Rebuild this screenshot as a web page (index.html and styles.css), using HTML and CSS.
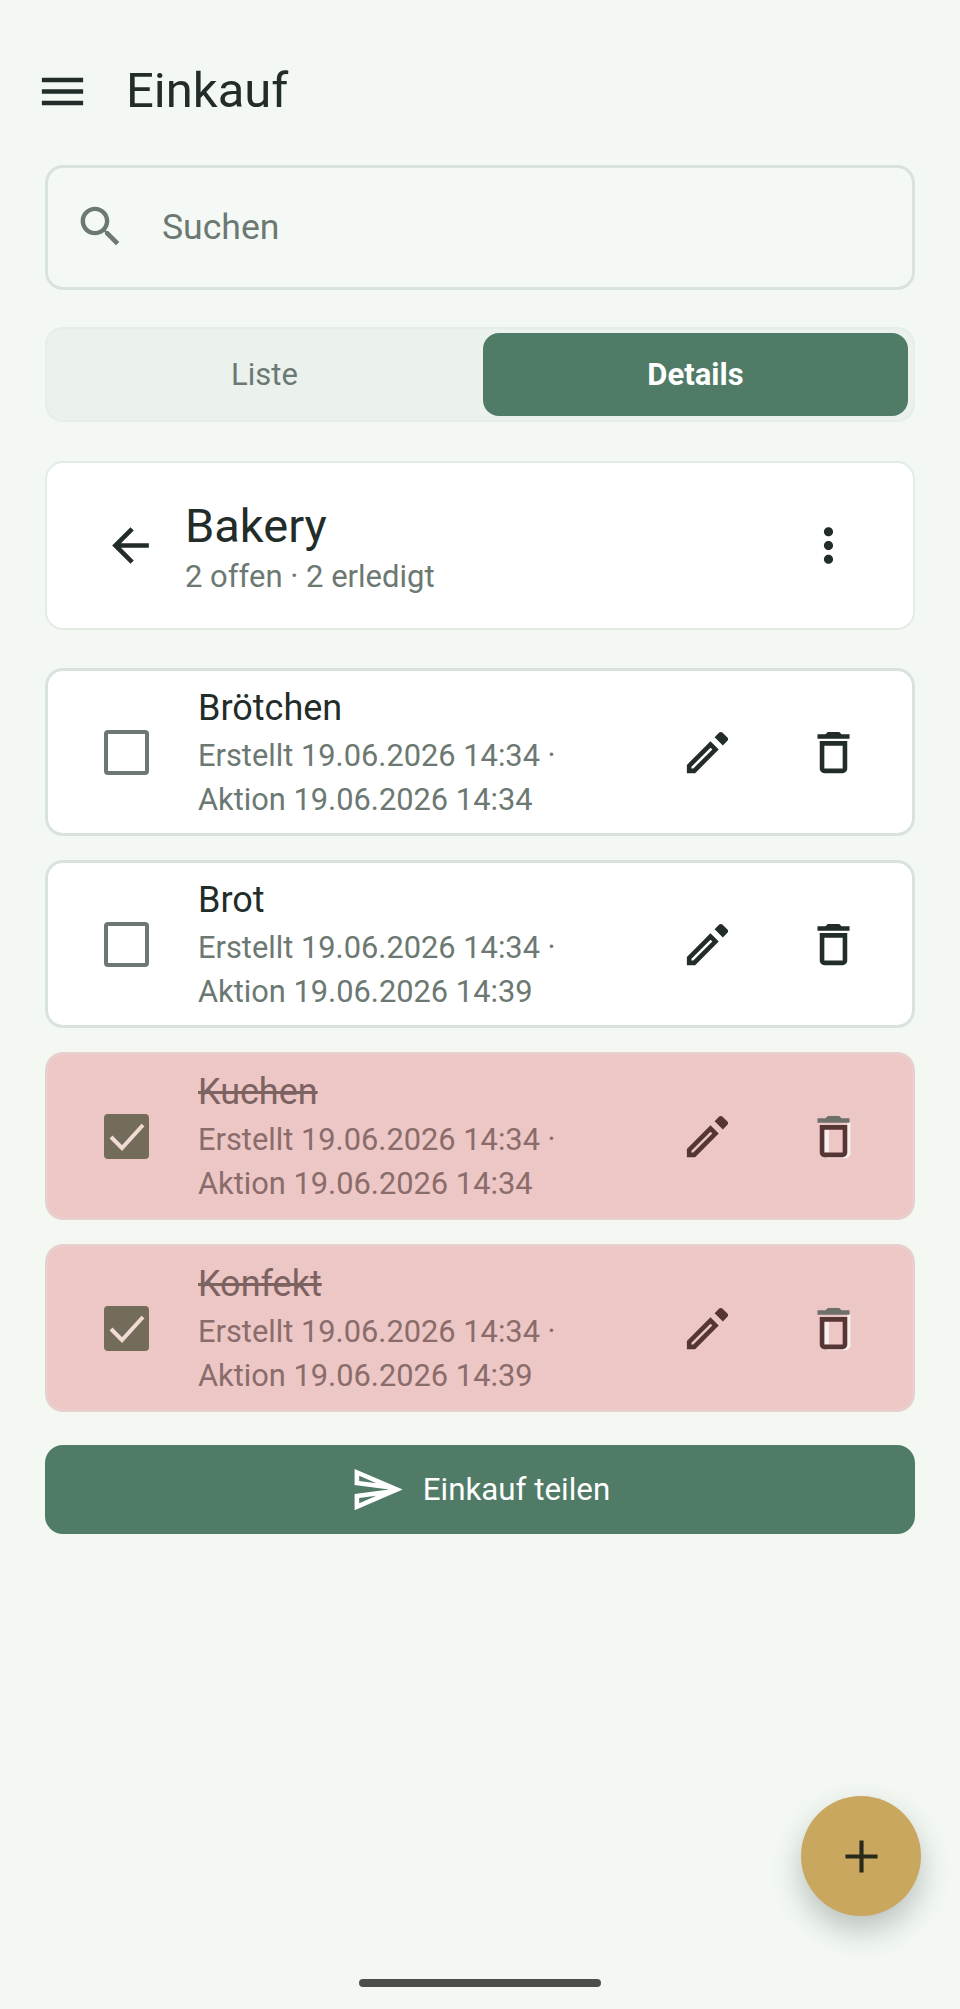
FILE: index.html
```html
<!doctype html>
<html lang="de">
<head>
  <meta charset="utf-8" />
  <meta name="viewport" content="width=device-width,initial-scale=1" />
  <title>Einkauf</title>
  <link rel="stylesheet" href="styles.css">
</head>
<body>
  <div class="screen">
    <header class="toolbar">
      <svg class="icon" viewBox="0 0 24 24"><path d="M3 18h18v-2H3v2zm0-5h18v-2H3v2zm0-7v2h18V6H3z"/></svg>
      <h1>Einkauf</h1>
    </header>

    <main class="content">
      <div class="search">
        <svg class="icon" viewBox="0 0 24 24"><path d="M15.5 14h-.79l-.28-.27C15.41 12.59 16 11.11 16 9.5 16 5.91 13.09 3 9.5 3S3 5.91 3 9.5 5.91 16 9.5 16c1.61 0 3.09-.59 4.23-1.57l.27.28v.79l5 4.99L20.49 19l-4.99-5zm-6 0C7.01 14 5 11.99 5 9.5S7.01 5 9.5 5 14 7.01 14 9.5 11.99 14 9.5 14z"/></svg>
        <span>Suchen</span>
      </div>

      <div class="tabs">
        <div class="tab">Liste</div>
        <div class="tab active">Details</div>
      </div>

      <section class="list-head">
        <svg class="icon" viewBox="0 0 24 24"><path d="M20 11H7.83l5.59-5.59L12 4l-8 8 8 8 1.41-1.41L7.83 13H20v-2z"/></svg>
        <div class="list-info">
          <h2>Bakery</h2>
          <div class="count">2 offen · 2 erledigt</div>
        </div>
        <svg class="icon" viewBox="0 0 24 24"><path d="M12 8c1.1 0 2-.9 2-2s-.9-2-2-2-2 .9-2 2 .9 2 2 2zm0 2c-1.1 0-2 .9-2 2s.9 2 2 2 2-.9 2-2-.9-2-2-2zm0 6c-1.1 0-2 .9-2 2s.9 2 2 2 2-.9 2-2-.9-2-2-2z"/></svg>
      </section>

      <div class="items">
        <article class="item">
          <div class="check"></div>
          <div class="item-text">
            <div class="name">Brötchen</div>
            <div class="meta">Erstellt 19.06.2026 14:34 · Aktion 19.06.2026 14:34</div>
          </div>
          <svg class="icon" viewBox="0 0 24 24"><path fill-rule="evenodd" d="M3 17.4V21h3.6L16.9 10.7l-3.6-3.6L3 17.4zM5 19v-.8l8.3-8.3.8.8L5.8 19H5z"/><path d="M20.7 6.9c.4-.4.4-1 0-1.4l-2.2-2.2c-.4-.4-1-.4-1.4 0l-2 2 3.6 3.6 2-2z"/></svg>
          <svg class="icon" viewBox="0 0 24 24"><path d="M6 19c0 1.1.9 2 2 2h8c1.1 0 2-.9 2-2V7H6v12zM8 9h8v10H8V9zm7.5-5l-1-1h-5l-1 1H5v2h14V4z"/></svg>
        </article>

        <article class="item">
          <div class="check"></div>
          <div class="item-text">
            <div class="name">Brot</div>
            <div class="meta">Erstellt 19.06.2026 14:34 · Aktion 19.06.2026 14:39</div>
          </div>
          <svg class="icon" viewBox="0 0 24 24"><path fill-rule="evenodd" d="M3 17.4V21h3.6L16.9 10.7l-3.6-3.6L3 17.4zM5 19v-.8l8.3-8.3.8.8L5.8 19H5z"/><path d="M20.7 6.9c.4-.4.4-1 0-1.4l-2.2-2.2c-.4-.4-1-.4-1.4 0l-2 2 3.6 3.6 2-2z"/></svg>
          <svg class="icon" viewBox="0 0 24 24"><path d="M6 19c0 1.1.9 2 2 2h8c1.1 0 2-.9 2-2V7H6v12zM8 9h8v10H8V9zm7.5-5l-1-1h-5l-1 1H5v2h14V4z"/></svg>
        </article>

        <article class="item done">
          <div class="check"><svg viewBox="0 0 45 45"><path d="M7 23l11 11L39 11" fill="none" stroke-width="4"/></svg></div>
          <div class="item-text">
            <div class="name">Kuchen</div>
            <div class="meta">Erstellt 19.06.2026 14:34 · Aktion 19.06.2026 14:34</div>
          </div>
          <svg class="icon" viewBox="0 0 24 24"><path fill-rule="evenodd" d="M3 17.4V21h3.6L16.9 10.7l-3.6-3.6L3 17.4zM5 19v-.8l8.3-8.3.8.8L5.8 19H5z"/><path d="M20.7 6.9c.4-.4.4-1 0-1.4l-2.2-2.2c-.4-.4-1-.4-1.4 0l-2 2 3.6 3.6 2-2z"/></svg>
          <svg class="icon trash" viewBox="0 0 24 24"><path class="ghost" d="M8 9h2v10H8zM18 5.5h1.4V20l-1.4 1.5h-9V21h7c1.1 0 2-.9 2-2V5.5z"/><path d="M6 19c0 1.1.9 2 2 2h8c1.1 0 2-.9 2-2V7H6v12zM8 9h8v10H8V9z"/><path class="lid" d="M15.5 4l-1-1h-5l-1 1H5v2h14V4z"/></svg>
        </article>

        <article class="item done">
          <div class="check"><svg viewBox="0 0 45 45"><path d="M7 23l11 11L39 11" fill="none" stroke-width="4"/></svg></div>
          <div class="item-text">
            <div class="name">Konfekt</div>
            <div class="meta">Erstellt 19.06.2026 14:34 · Aktion 19.06.2026 14:39</div>
          </div>
          <svg class="icon" viewBox="0 0 24 24"><path fill-rule="evenodd" d="M3 17.4V21h3.6L16.9 10.7l-3.6-3.6L3 17.4zM5 19v-.8l8.3-8.3.8.8L5.8 19H5z"/><path d="M20.7 6.9c.4-.4.4-1 0-1.4l-2.2-2.2c-.4-.4-1-.4-1.4 0l-2 2 3.6 3.6 2-2z"/></svg>
          <svg class="icon trash" viewBox="0 0 24 24"><path class="ghost" d="M8 9h2v10H8zM18 5.5h1.4V20l-1.4 1.5h-9V21h7c1.1 0 2-.9 2-2V5.5z"/><path d="M6 19c0 1.1.9 2 2 2h8c1.1 0 2-.9 2-2V7H6v12zM8 9h8v10H8V9z"/><path class="lid" d="M15.5 4l-1-1h-5l-1 1H5v2h14V4z"/></svg>
        </article>
      </div>

      <button class="share">
        <svg class="icon" viewBox="0 0 24 24"><path d="M4.01 6.03l7.51 3.22-7.52-1 .01-2.22m7.5 8.72L4 17.97v-2.22l7.51-1M2.01 3L2 10l15 2-15 2 .01 7L23 12 2.01 3z"/></svg>
        Einkauf teilen
      </button>
    </main>

    <button class="fab" aria-label="Hinzufügen">
      <svg class="icon" viewBox="0 0 24 24"><path d="M19 12.9h-6.1V19h-1.8v-6.1H5v-1.8h6.1V5h1.8v6.1H19v1.8z"/></svg>
    </button>
    <div class="home-bar"></div>
  </div>
</body>
</html>
```

FILE: styles.css
```css
:root{
  --bg:#f3f8f3;
  --ink:#222c29;
  --muted:#6c7872;
  --green:#507b67;
  --line:#d8e3db;
  --red:#ecc7c6;
}
*{box-sizing:border-box}
html,body{height:100%}
body{
  margin:0;
  background:var(--bg);
  color:var(--ink);
  font-family:Roboto,"Noto Sans",sans-serif;
}

.screen{
  position:relative;
  height:2009px;
  overflow:hidden;
}

.icon{
  display:block;
  flex:none;
  width:55px;
  height:55px;
  fill:currentColor;
}

.toolbar{
  height:165px;
  padding:64px 0 0 35px;
  display:flex;
  align-items:flex-start;
  gap:36px;
}
h1{margin:-3px 0 0;font-size:49px;line-height:60px;font-weight:400}

.content{
  padding:0 45px;
  display:flex;
  flex-direction:column;
}

.search{
  height:125px;
  display:flex;
  align-items:center;
  gap:35px;
  padding:0 0 2px 26px;
  background:#f5f9f5;
  border:3px solid var(--line);
  border-radius:18px;
  color:var(--muted);
  font-size:35.6px;
}
.search .icon{width:53px;height:53px}

.tabs{
  margin-top:37px;
  height:95px;
  display:flex;
  gap:6px;
  padding:4px 5px;
  background:#ebf1ec;
  border:2px solid #e6eee8;
  border-radius:18px;
}
.tab{
  flex:1;
  display:flex;
  align-items:center;
  justify-content:center;
  border-radius:16px;
  color:var(--muted);
  font-size:31px;
}
.tab.active{background:var(--green);color:#fff;font-weight:700}

.list-head{
  margin-top:39px;
  height:169px;
  display:flex;
  align-items:center;
  padding:0 57px 0 56px;
  background:#fff;
  border:2px solid #e3ebe5;
  border-radius:18px;
}
.list-info{flex:1;margin-left:27px;padding-top:5px}
h2{margin:0;font-size:47px;line-height:58px;font-weight:400}
.count{font-size:31px;line-height:44px;color:var(--muted)}

.items{
  margin-top:38px;
  display:flex;
  flex-direction:column;
  gap:24px;
}
.item{
  height:168px;
  display:flex;
  align-items:center;
  padding:0 51px 0 56px;
  background:#fff;
  border:3px solid var(--line);
  border-radius:18px;
}
.check{
  flex:none;
  width:45px;
  height:45px;
  border:4px solid var(--muted);
  border-radius:4px;
}
.item-text{width:410px;margin-left:49px;padding-top:2px}
.name{font-size:36px;line-height:46px;margin-bottom:3px}
.meta{font-size:30.8px;line-height:44px;color:var(--muted)}
.item .icon:nth-of-type(1){margin-left:73px}
.item .icon:nth-of-type(2){margin-left:71px}

.item.done{
  background:var(--red);
  border-color:#e8cfcd;
  color:#563634;
}
.item.done .name{text-decoration:line-through;color:#7c6361}
.item.done .meta{color:#8a6c6b}
.item.done .check{
  background:#736c5b;
  border:0;
}
.check svg{display:block;stroke:#f0dcd4}
.trash .ghost{fill:#f8eeee}
.trash .lid{fill:#6e706a}

.share{
  margin-top:33px;
  height:89px;
  display:flex;
  align-items:center;
  justify-content:center;
  gap:18px;
  border:0;
  border-radius:18px;
  background:var(--green);
  color:#fff;
  font-family:inherit;
  font-size:31.3px;
}

.fab{
  position:absolute;
  left:801px;
  top:1796px;
  width:120px;
  height:120px;
  display:flex;
  align-items:center;
  justify-content:center;
  padding:0;
  border:0;
  border-radius:50%;
  background:#c9a75e;
  color:#2a2a1c;
  box-shadow:0 14px 30px rgba(40,50,45,.28);
}

.home-bar{
  position:absolute;
  left:359px;
  top:1979px;
  width:242px;
  height:8px;
  border-radius:4px;
  background:#4a4f4c;
}
```
